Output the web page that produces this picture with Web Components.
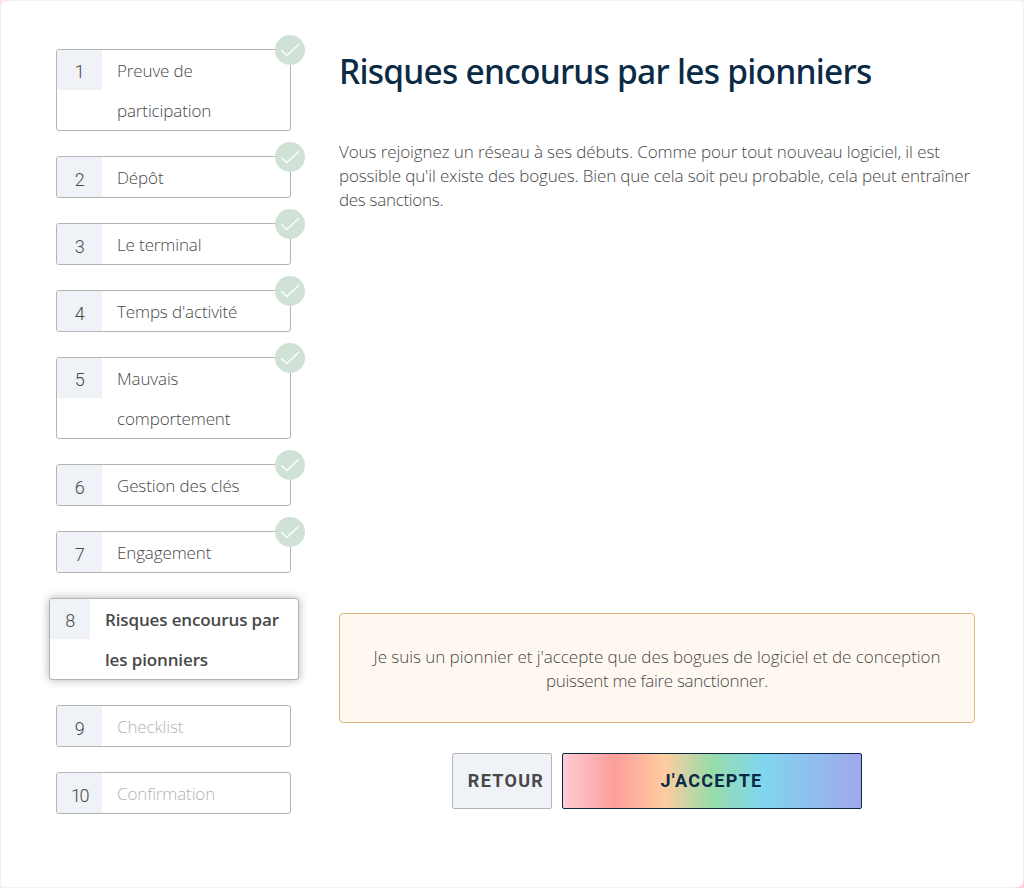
<!DOCTYPE html>
<html lang="fr">
<head>
<meta charset="utf-8">
<title>Risques encourus par les pionniers</title>
<style>
html, body { margin: 0; height: 100%; }
body { background: linear-gradient(135deg, #ffe4ea 0 4px, #eef2f8 8px, #f2f2f2 calc(100% - 8px), #ffccd5 calc(100% - 4px)); font-family: "Open Sans", "Noto Sans", sans-serif; font-size: 17px; font-weight: 300; color: #484848; overflow: hidden; }
.t1 { letter-spacing: -0.14px; }
.t2 { letter-spacing: -0.3px; }
</style>
</head>
<body>
<wizard-card>
  <step-list slot="steps">
    <step-item number="1" done tall>Preuve de participation</step-item>
    <step-item number="2" done>Dépôt</step-item>
    <step-item number="3" done>Le terminal</step-item>
    <step-item number="4" done>Temps d'activité</step-item>
    <step-item number="5" done tall>Mauvais comportement</step-item>
    <step-item number="6" done>Gestion des clés</step-item>
    <step-item number="7" done>Engagement</step-item>
    <step-item number="8" active tall>Risques encourus par les pionniers</step-item>
    <step-item number="9" disabled>Checklist</step-item>
    <step-item number="10" disabled>Confirmation</step-item>
  </step-list>
  <step-content>
    <span slot="title">Risques encourus par les pionniers</span>
    <span slot="body">Vous rejoignez un réseau à ses débuts. Comme pour tout nouveau logiciel, il est<br><span class="t1">possible qu'il existe des bogues. Bien que cela soit peu probable, cela peut entraîner</span><br><span class="t2">des sanctions.</span></span>
    <consent-box slot="consent">Je suis un pionnier et j'accepte que des bogues de logiciel et de conception<br><span class="t2">puissent me faire sanctionner.</span></consent-box>
    <wizard-button slot="actions">Retour</wizard-button>
    <wizard-button slot="actions" primary>J'accepte</wizard-button>
  </step-content>
</wizard-card>
<script>
const define = (name, html, setup) => customElements.define(name, class extends HTMLElement {
  constructor() {
    super();
    this.attachShadow({ mode: 'open' }).innerHTML = html;
  }
  connectedCallback() { if (setup) setup(this, this.shadowRoot); }
});

define('wizard-card', `
<style>
:host { display: grid; grid-template-columns: 250px 636px; column-gap: 40px; box-sizing: border-box; width: 1022px; height: 886px; margin: 0 1px; padding: 48px 48px 78px; background: #fff; border-radius: 5px; position: relative; top: 1px; }
</style>
<slot name="steps"></slot><slot></slot>`);

define('step-list', `
<style>:host { display: flex; flex-direction: column; align-items: flex-start; gap: 25px; }</style>
<slot></slot>`);

define('step-item', `
<style>
:host { display: flex; align-items: flex-start; position: relative; box-sizing: border-box; width: 235px; margin-left: 7px; border: 1px solid #b4b4b4; border-radius: 3px; background: #fff; line-height: 40px; letter-spacing: -0.13px; }
.num { flex: none; width: 45px; height: 40px; box-sizing: border-box; padding-top: 3px; line-height: 40px; text-align: center; background: #eff3f8; font-family: Roboto, sans-serif; font-size: 18px; letter-spacing: -0.5px; border-radius: 2px 0 0 2px; }
:host([number="10"]) .num { letter-spacing: -1.5px; }
:host([tall]) .num { padding-top: 2px; }
.label { flex: 1; height: 40px; padding: 1px 15px 0; box-sizing: border-box; }
:host([tall]) .label { height: 80px; }
:host([disabled]) .label { color: #b4b4b4; }
:host([active]) { width: 250px; margin-left: 0; font-weight: 600; box-shadow: 0 0 10px rgba(0,0,0,.3); }
:host([active]) .num { width: 40px; font-weight: 300; }
:host([active]) .label { padding-right: 10px; }
svg { display: none; position: absolute; top: -15px; right: -15px; }
:host([done]) svg { display: block; }
</style>
<div class="num"></div><div class="label"><slot></slot></div>
<svg width="30" height="30" viewBox="0 0 30 30"><circle cx="15" cy="15" r="15" fill="#d0e2d6"/><path d="M6.3 15.3 11.8 20.5 23.8 9.3" fill="none" stroke="#fff" stroke-width="1.3"/></svg>`,
(el, root) => { root.querySelector('.num').textContent = el.getAttribute('number'); });

define('step-content', `
<style>
:host { display: flex; flex-direction: column; height: 760px; }
h1 { margin: 0; font-family: "Noto Sans", sans-serif; font-size: 33.5px; font-weight: 500; line-height: 44px; color: #0b2a45; white-space: nowrap; letter-spacing: -0.75px; }
p { margin: 47px 0 0; line-height: 24px; white-space: nowrap; letter-spacing: -0.1px; }
.actions { display: flex; justify-content: center; gap: 10px; margin-top: 30px; }
.consent { margin-top: auto; }
</style>
<h1><slot name="title"></slot></h1>
<p><slot name="body"></slot></p>
<div class="consent"><slot name="consent"></slot></div>
<div class="actions"><slot name="actions"></slot></div>`);

define('consent-box', `
<style>:host { display: flex; align-items: center; justify-content: center; box-sizing: border-box; height: 110px; padding-top: 2px; border: 1px solid #e0b67e; border-radius: 4px; background: #fff8f1; line-height: 24px; text-align: center; white-space: nowrap; letter-spacing: -0.04px; }</style>
<div><slot></slot></div>`);

define('wizard-button', `
<style>
:host { display: block; width: 100px; height: 56px; }
:host([primary]) { width: 300px; }
button { display: flex; align-items: center; justify-content: center; box-sizing: border-box; width: 100%; height: 100%; margin: 0; padding: 0 0 2px 8px; border: 1px solid #b4b4b4; border-radius: 2px; background: #eff3f8; color: #484848; font: 700 18px Roboto, sans-serif; letter-spacing: 1.3px; text-transform: uppercase; }
:host([primary]) button { padding: 0 1px 2px 0; border-color: #0b2a45; color: #0b2a45; background: linear-gradient(to right, #ffccd5 0%, #fc9d9a 17%, #ffcc9f 34%, #98dcaa 50%, #80d6ee 67%, #a0a7ec 100%); }
</style>
<button><slot></slot></button>`);
</script>
</body>
</html>
